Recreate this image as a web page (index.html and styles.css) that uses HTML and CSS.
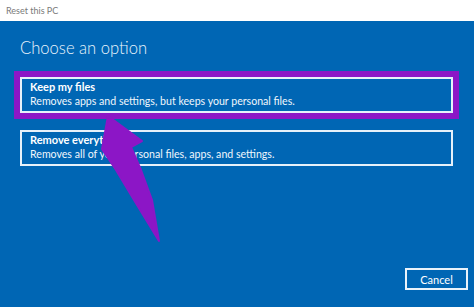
FILE: index.html
```html
<!DOCTYPE html>
<html>
<head>
<meta charset="utf-8">
<link rel="stylesheet" href="styles.css">
</head>
<body>
<div class="window">
  <div class="titlebar">Reset this PC</div>
  <div class="panel">
    <h1 class="heading">Choose an option</h1>
    <div class="options">
      <div class="option highlighted">
        <div class="opt-title">Keep my files</div>
        <div class="opt-desc">Removes apps and settings, but keeps your personal files.</div>
      </div>
      <div class="option">
        <div class="opt-title">Remove everything</div>
        <div class="opt-desc">Removes all of your personal files, apps, and settings.</div>
      </div>
    </div>
    <div class="footer">
      <button class="cancel">Cancel</button>
    </div>
  </div>
  <svg class="arrow" width="474" height="307" viewBox="0 0 474 307">
    <path d="M108 116 L142 141 L131 147 L141 170 L152 200 L159 241 L134 200 L116 170 L102 149 Z" fill="#8c16c6" stroke="#8c16c6" stroke-width="2" stroke-linejoin="round"/>
  </svg>
</div>
</body>
</html>
```
FILE: styles.css
```css
html, body {
  margin: 0;
  padding: 0;
}
body {
  width: 474px;
  height: 307px;
  overflow: hidden;
  font-family: Lato, "Open Sans", sans-serif;
}
.window {
  position: relative;
  width: 474px;
  height: 307px;
  display: flex;
  flex-direction: column;
}
.titlebar {
  height: 21px;
  background: #ffffff;
  color: #7a7a7a;
  font-size: 9px;
  line-height: 22px;
  padding-left: 6px;
  box-sizing: border-box;
}
.panel {
  flex: 1;
  background: #0066b4;
  display: flex;
  flex-direction: column;
  padding: 0 6px 17px 20px;
}
.heading {
  margin: 17px 0 0 0;
  font-weight: 300;
  font-size: 16.6px;
  line-height: 20px;
  color: #eaf4fc;
}
.options {
  margin-top: 19px;
  margin-right: 15px;
  display: flex;
  flex-direction: column;
  gap: 17px;
}
.option {
  border: 2px solid #e6f1fa;
  height: 36px;
  box-sizing: border-box;
  padding: 1px 8px 0 8px;
  color: #ffffff;
}
.option.highlighted {
  box-shadow: 0 0 0 6px #8c16c6;
}
.opt-title {
  font-weight: 700;
  font-size: 11px;
  line-height: 14px;
}
.opt-desc {
  font-size: 10.6px;
  line-height: 15px;
  color: #f0f6fc;
}
.footer {
  margin-top: auto;
  display: flex;
  justify-content: flex-end;
}
.cancel {
  width: 63px;
  height: 22px;
  background: transparent;
  border: 2px solid #eaf3fb;
  color: #ffffff;
  font-family: Lato, "Open Sans", sans-serif;
  font-size: 11px;
  padding: 0;
}
.arrow {
  position: absolute;
  left: 0;
  top: 0;
  pointer-events: none;
}
```
